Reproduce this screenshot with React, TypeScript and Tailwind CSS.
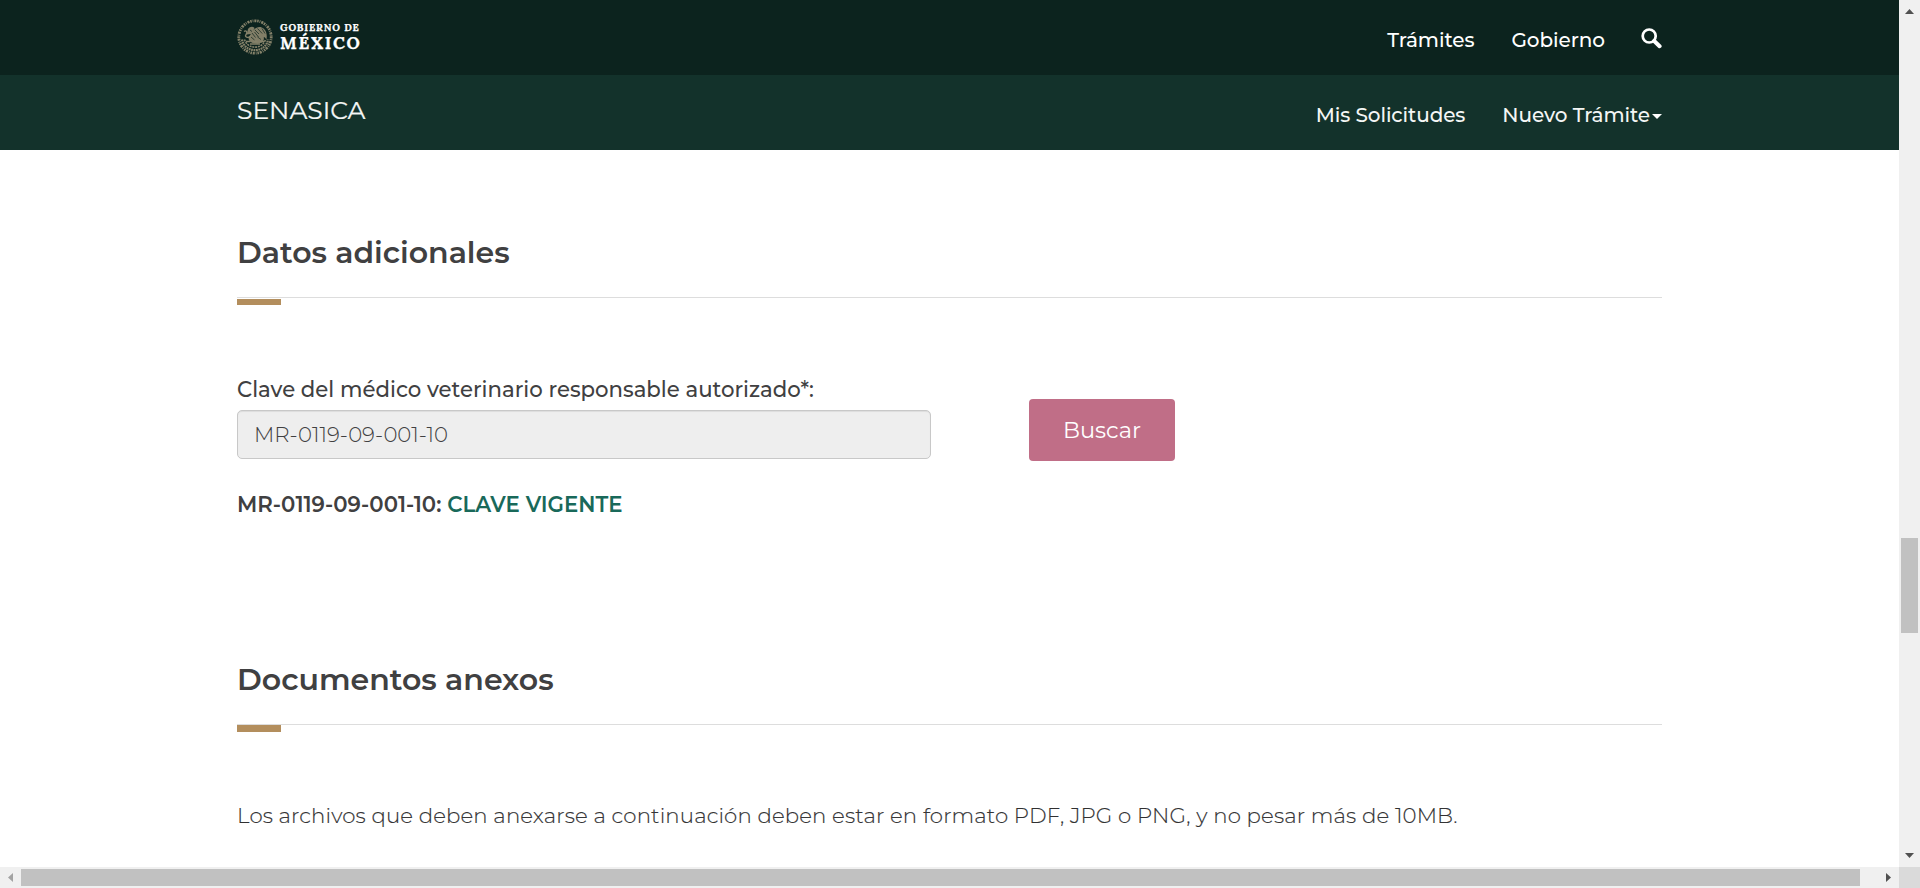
import type { ReactNode } from 'react';

const notes = 'Los archivos que deben anexarse a continuación deben estar en formato PDF, JPG o PNG, y no pesar más de 10MB.';

function Seal() {
  return (
    <svg width="36" height="36" viewBox="0 0 36 36" fill="none" stroke="#85826a">
      <circle cx="18" cy="18" r="16.2" strokeWidth="2.8" strokeDasharray="1.5 0.9 0.8 1 2.1 0.8" />
      <path d="M5 20.500c.8 6 6 10.600 13 10.600s12.200-4.600 13-10.600" strokeWidth="2.200" strokeDasharray="1.8 .6" />
      <path d="M7.500 20.500c1.400 4.500 5.200 7.600 10.500 7.600s9.100-3.100 10.500-7.600" strokeWidth="1.600" strokeDasharray="2 .8" />
      <path d="M11 10c2-2.700 4.700-2.900 6.600-1.100l-1.300 2.500c2.700-3.400 6.900-4.600 10.600-1.700 2.600 2.600 3.600 6.900 2.400 11.200-.7-2-1.700-2.600-2.500-2.800.3 2.100-.2 4-1.700 5.300l-4.400 1.300-5.200-.8c-3-.9-4.200-3.100-3.900-5.500l2.200-3.300-4.100.4z" fill="#817e67" stroke="none" />
      <path d="M18 11l4 4m-1.500-5.500 4.700 5m-.2-5 3 5M15 14l3.500 4.500m-1-5.500 4 5M14 18l3.500 3m3-3 3.500 2.500M13 11l2 1.500" stroke="#1d3028" strokeWidth=".8" />
      <path d="M7 12.500c2-1.500 3.400.2 2.500 2.100s-1.800 2.600.2 3.500c1.800.8 3.300-.2 4.300-1.300M9 22.500h4.500m3 0h4m2.500 0h4M13 25h10" strokeWidth="1.400" />
    </svg>
  );
}

function Logo() {
  return (
    <div className="flex items-start gap-[7px]">
      <Seal />
      <div className="flex flex-col whitespace-nowrap font-['Lora','Noto_Serif','DejaVu_Serif',serif] font-bold text-white [-webkit-text-stroke:0.25px_#fff]">
        <span className="mt-[3px] text-[10px] leading-[11px] tracking-[0.85px]">GOBIERNO DE</span>
        <span className="text-[17.3px] leading-[20px] tracking-[1.7px]">MÉXICO</span>
      </div>
    </div>
  );
}

function SearchIcon() {
  return (
    <svg width="21" height="21" viewBox="0 0 21 21" fill="none" stroke="#fff">
      <circle cx="8.2" cy="8" r="6.500" strokeWidth="2.700" />
      <path d="M13.200 13l5.400 5.200" strokeWidth="4" strokeLinecap="round" />
    </svg>
  );
}

function Heading({ children, late }: { children: ReactNode; late?: boolean }) {
  return (
    <div>
      <h2 className="h-[66px] border-b border-[#dddddd] pt-px text-[30px] leading-[40px] font-semibold">{children}</h2>
      <div className={late ? 'h-[7px] w-11 bg-[#b38e5d]' : 'mt-px h-[6px] w-11 bg-[#b38e5d]'} />
    </div>
  );
}

function Scrollbars() {
  return (
    <>
      <div className="col-start-2 row-start-1 flex flex-col items-center bg-[#f0f0f0]">
        <svg className="mt-[9px]" width="9" height="5" viewBox="0 0 9 5"><path d="M4.500 0 9 5H0z" fill="#505050" /></svg>
        <div className="mt-[524px] h-[95px] w-[17px] bg-[#c1c1c1]" />
        <svg className="mt-[220px]" width="9" height="5" viewBox="0 0 9 5"><path d="M0 0h9L4.500 5z" fill="#505050" /></svg>
      </div>
      <div className="col-start-1 row-start-2 flex items-center bg-[#f0f0f0]">
        <svg className="ml-2" width="5" height="9" viewBox="0 0 5 9"><path d="M5 0v9L0 4.500z" fill="#a3a3a3" /></svg>
        <div className="ml-2 h-[17px] w-[1839px] bg-[#c1c1c1]" />
        <svg className="ml-[26px]" width="5" height="9" viewBox="0 0 5 9"><path d="M0 0v9l5-4.500z" fill="#505050" /></svg>
      </div>
      <div className="col-start-2 row-start-2 bg-[#dadada]" />
    </>
  );
}

export default function App() {
  return (
    <div className="grid h-[888px] w-[1920px] grid-cols-[1899px_21px] grid-rows-[867px_21px] overflow-hidden bg-white font-['Montserrat','Inter',sans-serif] text-[#404041]">
      <div className="overflow-hidden">
        <header className="text-white">
          <div className="h-[75px] bg-[#0c231e]">
            <div className="mx-auto flex h-full w-[1425px] items-start justify-between pt-[19px]">
              <Logo />
              <nav className="flex pt-px text-[20px] leading-[40px] font-medium">
                <a className="mr-[37px] tracking-[-0.05px]">Trámites</a>
                <a className="mr-[36px] tracking-[-0.05px]">Gobierno</a>
                <a className="mt-[8px]"><SearchIcon /></a>
              </nav>
            </div>
          </div>
          <div className="h-[75px] bg-[#13322b]">
            <div className="mx-auto flex h-full w-[1425px] items-start justify-between pt-[15px]">
              <span className="text-[25px] leading-[40px] text-[#f4f6f5] [-webkit-text-stroke:0.2px_#f4f6f5]">SENASICA</span>
              <nav className="flex items-center pt-[5px] text-[20px] leading-[40px] font-medium text-[#f4f6f5]">
                <a className="mr-[37px] tracking-[-0.09px]">Mis Solicitudes</a>
                <a className="mr-[2px] tracking-[-0.05px]">Nuevo Trámite</a>
                <svg className="mt-[3px]" width="10" height="5" viewBox="0 0 10 5"><path d="M0 0h10L5 5z" fill="#fff" /></svg>
              </nav>
            </div>
          </div>
        </header>
        <main className="mx-auto w-[1425px] pt-[82px]">
          <Heading>Datos adicionales</Heading>
          <div className="mt-[64px] flex gap-[98px]">
            <div className="w-[694px]">
              <label className="block h-[41px] text-[21.25px] leading-[40px] font-medium">Clave del médico veterinario responsable autorizado*:</label>
              <input
                className="block h-[49px] w-full rounded-[5px] border border-[#c8c8c8] bg-[#eeeeee] px-[16px] pb-[2px] text-[21.25px] font-light text-[#404041] shadow-[inset_0_1px_1px_rgba(0,0,0,0.075)] outline-none"
                defaultValue="MR-0119-09-001-10"
                readOnly
              />
            </div>
            <button className="mt-[30px] h-[62px] w-[146px] rounded-[4px] bg-[#c06e87] pt-[2px] text-[22.5px] text-white">Buscar</button>
          </div>
          <p className="mt-[23px] text-[21.25px] leading-[40px] font-semibold">
            MR-0119-09-001-10: <span className="text-[#19695a]">CLAVE VIGENTE</span>
          </p>
          <div className="mt-[135px]">
            <Heading late>Documentos anexos</Heading>
          </div>
          <p className="mt-[63px] text-[21.25px] leading-[40px] font-light tracking-[0.138px] whitespace-nowrap text-[#303031] [-webkit-text-stroke:0.15px_#404041]">{notes}</p>
        </main>
      </div>
      <Scrollbars />
    </div>
  );
}
